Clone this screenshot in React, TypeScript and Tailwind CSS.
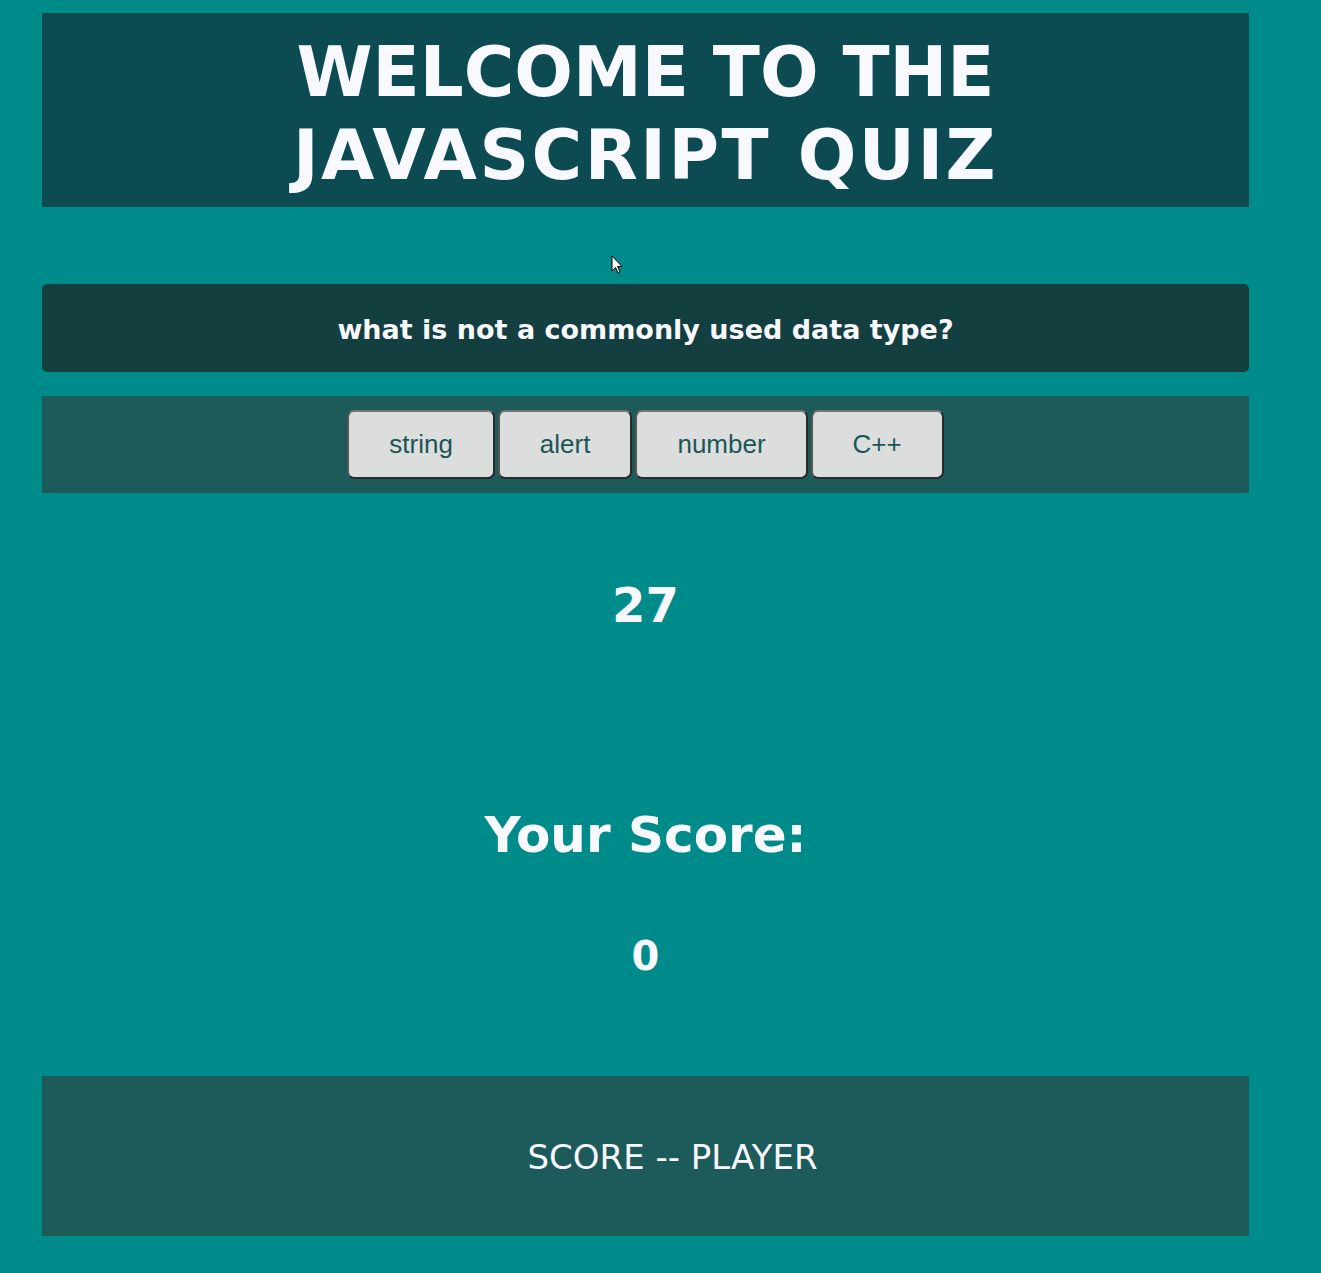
import React from "react";

const answers = ["string", "alert", "number", "C++"];

export default function App() {
  return (
    <div
      className="relative min-h-screen w-full bg-[#008b8b] pt-[13px] pb-[37px]"
      style={{ fontFamily: '"DejaVu Sans", Verdana, sans-serif' }}
    >
      <div className="ml-[42px] w-[1207px]">
        <header className="bg-[#0d4b52] pt-[18px] pb-[10px] text-center">
          <h1 className="text-[69px] font-bold leading-[83px] text-[#f8f8ff]">
            WELCOME TO THE
            <br />
            <span className="tracking-[2.5px]">JAVASCRIPT QUIZ</span>
          </h1>
        </header>

        <section className="mt-[77px] flex h-[88px] items-center justify-center rounded-[5px] bg-[#133f41] pt-[5px]">
          <h2 className="text-[27px] font-bold text-[#f8f8ff]">
            what is not a commonly used data type?
          </h2>
        </section>

        <section className="mt-[24px] flex h-[97px] items-center justify-center gap-[3px] bg-[#1d5a5a]">
          {answers.map((a) => (
            <button
              key={a}
              className="h-[69px] rounded-[7px] border-2 border-[#2a2a2a] border-t-[#777777] border-l-[#555555] bg-[#dcdedd] px-[40px] text-[26px] text-[#1b5656]"
              style={{ fontFamily: '"Liberation Sans", Arial, sans-serif' }}
            >
              {a}
            </button>
          ))}
        </section>

        <div className="mt-[88px] text-center text-[48px] font-bold leading-none text-[#f8f8ff]">
          27
        </div>

        <div className="mt-[181px] text-center text-[50px] font-bold leading-none text-[#f8f8ff]">
          Your Score:
        </div>

        <div className="mt-[76px] text-center text-[40px] font-bold leading-none text-[#f8f8ff]">
          0
        </div>

        <footer className="mt-[100px] flex h-[160px] items-center justify-center bg-[#1d5a5a] pl-[54px] pt-[2px]">
          <span className="text-[34px] text-[#f8f8ff]">SCORE -- PLAYER</span>
        </footer>
      </div>

      <svg
        className="absolute left-[611px] top-[255px]"
        width="12"
        height="19"
        viewBox="0 0 12 19"
      >
        <path
          d="M1 1 L1 16 L4.5 12.5 L7 18 L9 17 L6.5 11.5 L11 11.5 Z"
          fill="#ffffff"
          stroke="#000000"
          strokeWidth="1"
          strokeLinejoin="round"
        />
      </svg>
    </div>
  );
}
